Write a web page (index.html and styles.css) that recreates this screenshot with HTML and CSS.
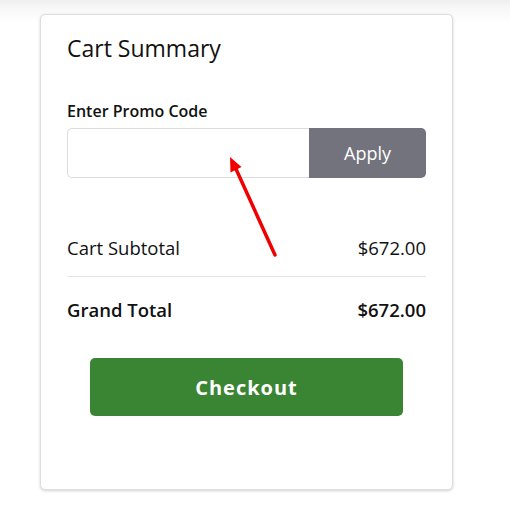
FILE: index.html
```html
<!DOCTYPE html>
<html lang="en">
<head>
<meta charset="utf-8">
<title>Cart Summary</title>
<link rel="stylesheet" href="styles.css">
</head>
<body>
<div class="page">
  <section class="card">
    <h2 class="title">Cart Summary</h2>
    <label class="promo-label" for="promo">Enter Promo Code</label>
    <div class="promo-group">
      <input class="promo-input" id="promo" type="text">
      <button class="apply-btn" type="button">Apply</button>
    </div>
    <div class="row subtotal">
      <span>Cart Subtotal</span>
      <span>$672.00</span>
    </div>
    <div class="row grand">
      <span>Grand Total</span>
      <span>$672.00</span>
    </div>
    <button class="checkout-btn" type="button">Checkout</button>
  </section>
  <svg class="annotation" width="510" height="528" viewBox="0 0 510 528" aria-hidden="true">
    <line x1="236" y1="169" x2="275" y2="255" stroke="#f00000" stroke-width="3.5" stroke-linecap="round"/>
    <polygon points="230,157 241.5,167 230.5,172.5" fill="#f00000"/>
  </svg>
</div>
</body>
</html>
```

FILE: styles.css
```css
* { box-sizing: border-box; }

html, body {
  margin: 0;
  padding: 0;
}

body {
  background: linear-gradient(#efefef 0, #f7f7f7 8px, #ffffff 22px) no-repeat, #ffffff;
  font-family: "Open Sans", "Noto Sans", sans-serif;
  color: #111111;
  width: 510px;
  height: 528px;
  overflow: hidden;
}

.page {
  position: relative;
  padding: 14px 0 0 40px;
}

.card {
  width: 413px;
  height: 476px;
  background: #fff;
  border: 1px solid #dedede;
  border-radius: 5px;
  box-shadow: 0 1px 3px rgba(0, 0, 0, 0.18);
  padding: 17px 26px 0 26px;
  display: flex;
  flex-direction: column;
}

.title {
  margin: 0;
  font-size: 23px;
  font-weight: 400;
  line-height: 32px;
  color: #111111;
}

.promo-label {
  display: block;
  margin-top: 37px;
  font-size: 16px;
  font-weight: 600;
  line-height: 20px;
}

.promo-group {
  display: flex;
  margin-top: 7px;
  height: 50px;
}

.promo-input {
  flex: 1;
  min-width: 0;
  height: 50px;
  border: 1px solid #dcdcdc;
  border-right: none;
  border-radius: 5px 0 0 5px;
  padding: 0 12px;
  font: inherit;
  outline: none;
  background: #fff;
}

.apply-btn {
  width: 117px;
  height: 50px;
  border: none;
  border-radius: 0 5px 5px 0;
  background: #72737d;
  color: #fff;
  font-family: "Open Sans", "Noto Sans", sans-serif;
  font-size: 18px;
  font-weight: 500;
  padding: 0;
}

.row {
  display: flex;
  justify-content: space-between;
  font-size: 18.5px;
  line-height: 24px;
}

.subtotal {
  margin-top: 58px;
  padding-bottom: 16px;
  border-bottom: 1px solid #e6e6e6;
}

.grand {
  padding-top: 21px;
  font-weight: 600;
}

.checkout-btn {
  align-self: center;
  margin-top: 36px;
  width: 313px;
  height: 58px;
  border: none;
  border-radius: 5px;
  background: #3a8534;
  color: #fff;
  font-family: "Open Sans", "Noto Sans", sans-serif;
  font-size: 20px;
  font-weight: 700;
  letter-spacing: 1px;
  padding: 0;
}

.annotation {
  position: absolute;
  left: 0;
  top: 0;
  pointer-events: none;
}
```
